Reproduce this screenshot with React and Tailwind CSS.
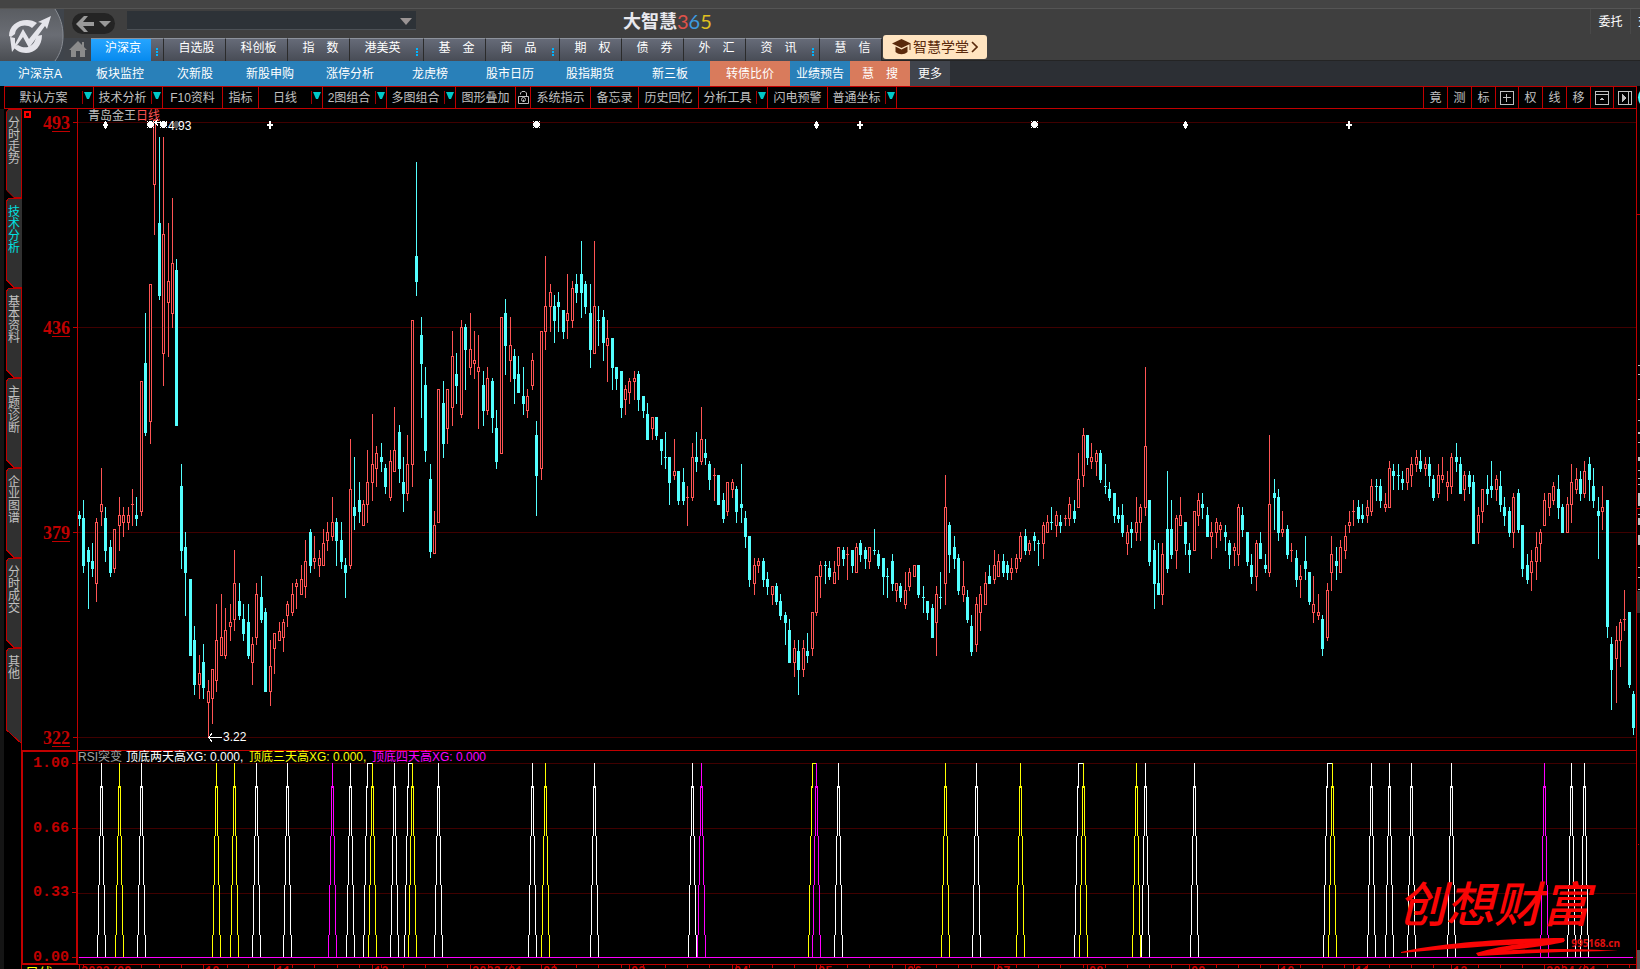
import React from "react";

const tabs = [
  { label: "沪深京", w: "w-[73px]", dots: true, active: true },
  { label: "自选股", w: "w-[62px]" },
  { label: "科创板", w: "w-[62px]" },
  { label: "指　数", w: "w-[62px]" },
  { label: "港美英", w: "w-[74px]", dots: true },
  { label: "基　金", w: "w-[62px]" },
  { label: "商　品", w: "w-[74px]", dots: true },
  { label: "期　权", w: "w-[62px]" },
  { label: "债　券", w: "w-[62px]" },
  { label: "外　汇", w: "w-[62px]" },
  { label: "资　讯", w: "w-[74px]", dots: true },
  { label: "慧　信", w: "w-[62px]" },
];

const BLUE = "bg-[#2980b9]";
const ORANGE = "bg-[#d97b5c]";
const links = [
  ["沪深京A", "w-20", BLUE],
  ["板块监控", "w-20", BLUE],
  ["次新股", "w-[70px]", BLUE],
  ["新股申购", "w-20", BLUE],
  ["涨停分析", "w-20", BLUE],
  ["龙虎榜", "w-20", BLUE],
  ["股市日历", "w-20", BLUE],
  ["股指期货", "w-20", BLUE],
  ["新三板", "w-20", BLUE],
  ["转债比价", "w-20", ORANGE],
  ["业绩预告", "w-[60px]", BLUE],
  ["慧　搜", "w-[60px]", ORANGE],
  ["更多", "w-10", "bg-[#40444c]"],
];

const tools = [
  ["默认方案", "w-[89px]", true],
  ["技术分析", "w-[69px]", true],
  ["F10资料", "w-[60px]"],
  ["指标", "w-[36px]"],
  ["日线", "w-[64px]", true],
  ["2图组合", "w-[64px]", true],
  ["多图组合", "w-[69px]", true],
  ["图形叠加", "w-[60px]"],
  ["lock", "w-[15px]"],
  ["系统指示", "w-[60px]"],
  ["备忘录", "w-[48px]"],
  ["历史回忆", "w-[60px]"],
  ["分析工具", "w-[69px]", true],
  ["闪电预警", "w-[60px]"],
  ["普通坐标", "w-[69px]", true],
];

const rightTools = [
  ["竟", "w-6"],
  ["测", "w-6"],
  ["标", "w-6"],
  ["grid", "w-[23px]"],
  ["权", "w-6"],
  ["线", "w-6"],
  ["移", "w-6"],
  ["up", "w-[23px]"],
  ["side", "w-[23px]"],
];

const sideTabs = ["分时走势", "技术分析", "基本资料", "主题诊断", "企业图谱", "分时成交", "其他"];

// Each group: origin of the block, then "colour x high top bottom low" in thirds of a pixel.
const groups = [
  [0, 430, `c 238 243 255 267 288;c 250 210 264 408 428;c 265 351 360 396 537;c 277 339 393 417 441;r 289 264 276 462 516;r 304 114 222 246 288;c 316 231 264 363 396;c 331 330 351 429 441;r 343 297 297 417 429;r 358 201 255 288 363;r 370 231 255 279 321;r 385 231 255 279 300;r 397 177 222 225 288;c 409 201 255 267 288;r 424 -147 -147 246 258;c 436 -351 -201 9 18;r 451 -438 -438 -24 42;r 463 -930 -930 -735 -585;c 478 -879 -621 -402 -390;r 490 -879 -588 -228 -132;r 505 -621 -447 -381 -219;r 517 -696 -501 -348 -306;c 529 -513 -480 -12 -12;c 544 102 168 363 417;c 556 306 351 429 558;c 571 447 447 678 678;c 583 588 630 765 795;r 598 675 729 765 807;c 610 642 696 774 807;r 625 750 783 819 921;r 637 717 717 807 882;r 649 522 630 753 786;r 664 492 621 678 678;r 676 534 600 678 687;r 691 522 576 591 633;r 703 360 459 570 603;c 718 459 513 558 570;c 730 522 567 612 633;c 745 522 576 678 687;r 757 621 642 699 765;r 769 459 492 624 645;c 784 438 501 570 579;c 796 534 546 786 786;r 811 630 708 786 828;r 823 609 609 657 732;r 838 576 603 633 633;r 850 567 576 624 666;r 862 513 522 558 591;r 877 459 492 549 558;r 889 447 459 471 537;r 904 405 447 495 495;r 916 330 393 471 504;c 931 297 306 408 429;r 943 318 384 396 417;r 958 360 384 408 441;r 970 297 339 408 408;r 982 276 306 333 363;r 997 201 276 321 333;c 1009 264 276 333 408;c 1024 276 330 396 417;c 1036 384 405 429 504;r 1051 27 177 408 417;c 1063 81 231 258 300;c 1078 156 210 246 279;r 1090 210 222 288 288;r 1102 60 156 225 279;r 1117 -48 102 159 213;r 1129 48 69 117 171;c 1144 39 81 96 126;c 1156 102 114 171 192;r 1171 60 93 204 213;r 1183 -69 60 126 126;c 1198 -15 6 117 159;c 1210 81 156 192 246;r 1222 15 102 192 213;r 1237 -330 -330 105 171;c 1249 -804 -522 -444 -402`],
  [400, 140, `c 64 531 585 672 834;c 76 681 735 933 966;c 91 972 1017 1236 1254;r 103 1113 1155 1242 1242;r 115 747 747 1149 1149;c 130 723 789 912 954;r 142 747 747 867 912;r 157 573 648 804 858;c 169 639 702 738 792;r 184 540 561 825 834;c 196 552 561 630 750;r 211 519 627 684 705;r 223 573 660 672 717;r 235 585 681 696 867;c 250 693 735 813 858;r 262 681 714 813 825;c 277 714 723 834 879;c 289 810 864 966 987;r 304 531 531 942 942;c 316 477 519 618 705;r 331 531 615 663 726;c 343 627 648 717 792;c 355 648 702 759 759;c 370 681 768 792 825;r 382 747 768 813 834;r 397 639 660 738 750;c 409 843 885 1008 1128;r 424 573 573 987 1020;r 436 348 498 576 630;r 451 432 456 501 576;c 463 465 498 543 609;c 475 456 486 501 576;c 490 510 510 576 597;r 502 402 519 543 597;r 517 423 444 543 564;c 529 402 432 459 489;c 544 303 402 459 534;c 556 423 432 501 522;c 571 432 519 630 684;r 583 303 498 642 642;c 595 498 540 543 618;c 610 510 531 609 663;r 622 540 594 618 726;c 637 594 594 684 750;c 649 681 681 717 750;c 664 693 693 804 834;r 676 735 747 780 825;r 688 714 723 759 792;r 703 693 714 726 780;c 715 693 702 780 813;c 730 768 768 813 834;c 742 789 822 900 900;r 757 831 831 867 900;c 769 831 831 888 900;c 784 897 897 933 975;c 796 876 951 954 987;c 808 951 951 1029 1095;r 823 897 993 1008 1020;c 835 993 993 1083 1095;c 850 984 1026 1083 1095;r 862 1038 1071 1074 1158;r 877 909 951 1074 1083;c 889 876 951 966 996;r 904 801 897 966 975;c 916 897 939 954 975;c 928 963 972 1020 1050;r 943 984 1005 1008 1083;c 955 1005 1005 1095 1095;c 970 1059 1080 1137 1149;r 982 1026 1026 1116 1128;r 997 1017 1026 1050 1074;c 1009 1038 1047 1116 1149;c 1024 972 1092 1104 1149;c 1036 1113 1134 1191 1224`],
  [700, 500, `c 148 108 108 240 261;r 163 174 195 252 285;r 175 174 183 198 219;c 190 174 183 240 261;c 202 216 237 261 285;r 217 258 258 285 315;c 229 249 258 306 315;c 241 282 303 348 360;c 256 336 345 369 435;c 268 357 390 489 489;r 283 420 444 489 531;c 295 420 453 510 585;r 310 420 444 510 531`],
  [800, 360, `c 22 819 873 888 909;r 37 756 756 867 888;r 49 648 648 759 768;r 61 603 615 651 714;c 76 603 615 618 672;c 88 603 624 651 660;r 103 603 636 672 672;r 115 561 561 618 660;c 130 561 570 597 618;r 142 561 582 585 660;c 157 570 570 618 639;r 169 549 561 639 639;c 181 540 549 585 606;c 196 561 570 597 627;r 208 561 561 606 627;c 223 507 570 573 585;c 235 570 582 618 627;c 250 594 594 651 705;c 262 624 648 651 714;c 277 582 603 672 693;r 289 669 669 693 726;c 301 669 678 714 726;r 316 636 690 735 747;r 328 624 636 681 693;r 343 615 615 651 651;c 355 615 615 705 714;c 370 678 711 714 759;c 382 723 723 759 780;c 397 732 744 834 834;r 409 678 702 789 888;c 421 636 711 714 747;r 436 345 441 672 735;c 448 486 495 585 639;c 463 528 561 597 627;c 475 582 594 693 705;r 490 603 678 705 726;c 502 690 711 780 789;c 514 765 798 876 888;r 529 711 732 855 876;r 541 678 702 759 813;r 556 636 669 735 735;c 568 615 648 672 672;r 583 570 615 660 672;r 595 582 603 651 651;c 610 582 603 639 651;c 622 603 615 639 660;r 634 594 624 639 660;r 649 582 594 627 639;r 661 516 528 597 606;c 676 507 528 573 585;r 688 540 549 573 585;c 703 516 528 543 573;c 715 540 549 552 618;r 730 486 495 552 597;r 742 465 486 519 519;c 754 441 486 489 510;r 769 453 465 498 531;c 781 465 486 498 519;r 796 465 474 477 498;r 808 411 432 477 498;c 823 420 453 477 489;r 835 279 357 444 444;r 850 204 225 348 381;c 862 225 225 294 315;r 874 249 291 306 327;r 889 270 279 306 348;c 901 270 279 360 369;c 916 312 378 381 402;c 928 366 387 414 423;c 943 399 399 468 489;c 955 441 465 477 489;c 967 432 465 519 531;r 982 495 516 552 585;c 994 486 507 519 564;r 1009 411 486 519 543;r 1021 432 441 489 543;r 1036 21 258 444 468;c 1048 420 420 606 618;c 1063 540 570 672 747;c 1075 549 669 705 705;r 1087 549 582 705 735;c 1102 333 507 627 639;c 1114 420 507 585 597;r 1129 465 474 573 627;r 1141 411 465 498 498;c 1156 486 486 552 585;c 1168 549 570 585 639;r 1183 453 453 573 573;r 1195 399 420 468 498;c 1207 399 432 444 477;c 1222 441 465 531 531;r 1234 486 516 531 597;r 1249 474 486 519 564;r 1261 486 495 510 543`],
  [1220, 360, `c 16 495 516 531 573;c 28 540 549 585 627;r 43 549 561 573 618;r 55 432 441 585 618;c 67 441 465 510 531;c 82 516 516 606 618;c 94 582 615 651 672;r 109 540 549 651 693;c 121 516 549 597 597;c 136 582 615 627 639;r 148 225 432 639 651;c 163 357 399 414 510;c 175 387 411 519 543;r 187 453 507 519 531;c 202 495 507 585 597;r 214 549 570 573 606;c 229 570 594 660 681;r 241 615 648 660 714;c 256 528 603 627 660;c 268 636 636 726 735;r 280 648 732 759 789;r 295 702 756 768 780;c 307 765 777 867 888;r 322 669 690 834 843;r 334 528 582 639 693;c 349 561 603 618 660;r 361 540 561 639 639;r 376 495 528 573 597;r 388 453 486 498 519;r 400 420 453 456 498;c 415 420 441 477 489;c 427 432 465 477 489;r 442 420 441 468 489;r 454 357 378 456 468;c 469 357 378 381 423;c 481 357 378 423 444;r 496 399 432 444 456;r 508 303 324 444 444;c 520 312 333 348 390;c 535 312 345 348 390;c 547 333 357 369 390;r 562 324 324 369 390;r 574 291 312 348 381;r 589 270 291 315 336;c 601 270 303 327 336;r 616 291 312 327 348;c 628 291 312 348 381;c 640 345 357 414 423;r 655 312 345 402 414;r 667 291 345 360 369;r 682 333 366 381 423;r 694 279 291 381 402;c 709 249 291 306 336;c 721 291 312 402 402;r 733 333 345 390 423;c 748 333 345 381 402;c 760 345 366 552 552;r 775 441 465 519 552;r 787 387 387 456 489;c 802 345 387 402 435;c 814 303 378 390 414;r 829 345 357 390 423;c 841 333 378 435 456;c 853 411 441 468 498;c 868 441 453 519 531;r 880 399 411 519 564;c 895 387 399 510 519;c 907 495 495 627 651;c 922 582 615 660 672;r 934 570 603 639 693;r 949 516 561 606 660;r 961 507 516 552 606;r 973 399 420 498 498;r 988 399 399 444 468;r 1000 366 378 423 435;c 1015 345 387 444 477;c 1027 432 441 519 519;r 1042 411 432 519 519;r 1054 312 366 435 489;r 1069 324 357 390 402;c 1081 333 357 402 423;r 1093 303 333 402 414;c 1108 291 312 360 423;c 1120 324 378 423 444;c 1135 411 453 468 597;r 1147 378 441 456 510;c 1162 420 420 801 834;c 1174 831 852 930 1050;r 1189 798 840 897 1029;r 1201 777 786 843 921;r 1213 690 777 780 813;c 1228 756 756 975 984;c 1240 993 1002 1104 1125`],
];

const candles = groups.flatMap(([ox, oy, rows]) =>
  rows.split(";").map((row) => {
    const [kind, ...n] = row.split(" ");
    const [x, h, t, b, l] = n.map(Number);
    const y = (v) => oy + Math.round(v / 3);
    return { up: kind === "r", x: ox + Math.floor(x / 3), h: y(h), t: y(t), b: y(b), l: y(l) };
  })
);

const markers = [
  ["dot", 105], ["star", 150], ["star", 163], ["dim", 176], ["plus", 269], ["star", 536],
  ["dot", 816], ["plus", 859], ["star", 1034], ["dot", 1185], ["plus", 1348],
];

// colour, first peak, and (for flat tops) colour and place of the second peak
const spikes = [
  ["w", 101], ["y", 119], ["w", 141], ["y", 216], ["y", 234], ["w", 256], ["w", 287], ["m", 332],
  ["w", 350], ["w", 367, "y", 372], ["w", 394], ["w", 408, "y", 412], ["w", 438], ["w", 532],
  ["y", 545], ["w", 594], ["w", 692], ["m", 701], ["y", 812, "m", 816], ["w", 838], ["y", 945],
  ["w", 976], ["y", 1020], ["w", 1078, "y", 1083], ["y", 1136], ["w", 1145], ["w", 1194],
  ["w", 1327, "y", 1332], ["w", 1371], ["w", 1389], ["w", 1411], ["w", 1451], ["m", 1544],
  ["w", 1571], ["w", 1584],
];
const ink = { w: "#ffffff", y: "#ffff00", m: "#ff00ff" };

const ticks = [83, 141, 159, 181, 227, 248, 292, 314, 337, 359, 381, 403, 425, 447, 488, 511, 554, 576, 598, 621, 643, 665, 687, 709, 736, 749, 772, 794, 820, 847, 869, 892, 914, 936, 958, 971, 998, 1016, 1038, 1060, 1083, 1105, 1127, 1149, 1171, 1216, 1238, 1260, 1300, 1322, 1344, 1367, 1389, 1411, 1433, 1478, 1500, 1522, 1562, 1584, 1607, 1629];
const months = [
  [79, "2022/09"], [203, "10"], [274, "11"], [372, "12"], [470, "2023/01"], [541, "02"],
  [629, "03"], [732, "04"], [816, "05"], [905, "06"], [994, "07"], [1087, "08"], [1189, "09"],
  [1278, "10"], [1353, "11"], [1451, "12"], [1544, "2024/01"],
];

function Logo() {
  return (
    <svg viewBox="0 0 64 52" className="h-[52px] w-16 shrink-0" role="img" aria-label="大智慧">
      <defs>
        <linearGradient id="lg" x1="0" y1="0" x2="0" y2="1">
          <stop offset="0" stopColor="#5a5d62" />
          <stop offset="0.5" stopColor="#6a6d74" />
          <stop offset="1" stopColor="#4a4d52" />
        </linearGradient>
      </defs>
      <rect width="64" height="52" fill="#3f444b" />
      <path d="M0 0H55C60 8 63 16 63 27C63 37 60 45 55 52H0Z" fill="url(#lg)" />
      <path d="M55 0C60 8 63 16 63 27C63 37 60 45 55 52" fill="none" stroke="#888c93" />
      <g fill="#e4e4ea">
        <path d="M9 27C9 17 17 11 27 11C31 11 34 12 37 14L32 19C25 14 16 17 15 25L11 28Z" />
        <path d="M42 26C42 37 35 44 26 44C20 44 16 41 13 38L18 36C25 41 35 38 36 27Z" />
        <path d="M10 28L15 29L15 35L23 20L29 30L42 14L38 13L51 7L47 20L45 17L29 39L23 28L12 43Z" />
      </g>
    </svg>
  );
}

function Home() {
  return (
    <svg viewBox="0 0 18 17" className="h-[17px] w-[18px]">
      <path d="M9 0L13 4V1H15V6L18 9H16V16H11V10H7V16H2V9H0Z" fill="#8b8b8b" />
    </svg>
  );
}

function ToolIcon({ name }) {
  if (name === "lock")
    return (
      <svg viewBox="0 0 13 15" className="h-[15px] w-[13px] shrink-0" fill="none" stroke="#c0c0c0">
        <path d="M3.500 4.500V3L5 1.500H8L9.500 3V6M1.500 6.500H11.500V13.500H1.500Z" />
        <circle cx="6.500" cy="9.500" r="2" />
        <path d="M6.500 9.500V12" />
      </svg>
    );
  return (
    <svg viewBox="0 0 14 14" className="h-[14px] w-[14px]" fill="none" stroke="#c0c0c0" shapeRendering="crispEdges">
      <path d="M0.500 0.500H13.500V13.500H0.500Z" />
      {name === "grid" && <path d="M6.500 3V11M3 6.500H11" />}
      {name === "up" && <path d="M0.500 3.500H13.500M6 7.500H8M5 8.500H9" />}
      {name === "side" && (
        <>
          <path d="M10.500 0.500V13.500" />
          <path d="M4 3L8 7L4 11Z" fill="#c0c0c0" stroke="none" />
        </>
      )}
    </svg>
  );
}

function Triangle() {
  return (
    <svg viewBox="0 0 8 8" className="h-2 w-2 shrink-0">
      <path d="M0 0H8L5 7H3Z" fill="#00c8c8" />
    </svg>
  );
}

function Header() {
  return (
    <header className="shrink-0 bg-[#3f3f3f] text-xs text-white">
      <div className="h-[9px] border-b border-[#555] bg-[#444]" />
      <div className="flex h-[52px] border-b border-[#242424]">
        <Logo />
        <div className="flex min-w-0 flex-1 flex-col">
          <div className="flex h-[29px] shrink-0 pl-2">
            <button aria-label="后退" className="mt-1 flex h-[21px] w-[43px] shrink-0 items-center justify-center gap-[5px] rounded-full bg-[#242424]">
              <svg viewBox="0 0 18 16" className="h-4 w-[18px]">
                <path d="M0 8L8 0H12L7 6H18V10H7L12 16H8Z" fill="#999" />
              </svg>
              <svg viewBox="0 0 12 6" className="h-[6px] w-3">
                <path d="M0 0H12L6 6Z" fill="#999" />
              </svg>
            </button>
            <div className="relative ml-3 mt-[2px] h-5 w-[289px] shrink-0">
              <select aria-label="搜索" className="h-[19px] w-full appearance-none border-b border-[#4c5156] bg-[#2d3237]">
                <option></option>
              </select>
              <svg viewBox="0 0 12 7" className="pointer-events-none absolute right-1 top-[7px] h-[7px] w-3">
                <path d="M0 0H12L6 7Z" fill="#9a9494" />
              </svg>
            </div>
            <div className="ml-[207px] flex h-6 shrink-0 items-center font-['Lato','Noto_Sans_CJK_SC',sans-serif] text-xl leading-6">
              <span className="text-lg font-bold leading-6 text-[#e8e8ee]">大智慧</span>
              <span className="text-[#e0524a]">3</span>
              <span className="text-[#3d9be0]">6</span>
              <span className="text-[#e0c020]">5</span>
            </div>
            <div className="ml-auto flex h-[25px] w-[50px] shrink-0 overflow-hidden border-l border-[#494949]">
              <button className="w-10 shrink-0 border-r border-[#494949]">委托</button>
              <button className="shrink-0 pl-[7px]">交易</button>
            </div>
          </div>
          <nav className="flex h-[23px] shrink-0">
            <button aria-label="首页" className="flex w-[27px] shrink-0 items-center justify-center bg-[#40444a]">
              <Home />
            </button>
            {tabs.map((t) => (
              <button
                key={t.label}
                className={
                  "flex shrink-0 border-r border-t border-r-[#2b2b2b] border-t-[#8d929c] bg-linear-to-b from-[#666b78] to-[#484c56] leading-4 " + t.w
                }
              >
                <span className={"h-full flex-1 whitespace-pre pl-1 pt-px text-center " + (t.active ? "bg-linear-to-b from-[#25a5ff] to-[#058aee]" : "")}>
                  {t.label}
                </span>
                {t.dots && (
                  <span className="flex h-full w-3 flex-col items-center justify-center gap-px pt-1">
                    <i className="size-[2px] bg-[#00b4ff]" />
                    <i className="size-[2px] bg-[#00b4ff]" />
                    <i className="size-[2px] bg-[#00b4ff]" />
                  </span>
                )}
              </button>
            ))}
            <button className="-mt-[3px] ml-px flex h-6 w-[104px] shrink-0 items-center rounded-[3px] bg-[#ffe4c0] pl-[9px] text-sm text-[#5a2a0c]">
              <svg viewBox="0 0 20 16" className="mr-px h-4 w-5 shrink-0" fill="#5a2a0c">
                <path d="M9.500 0L19 4.500L9.500 9L0 4.500Z" />
                <path d="M3.500 7.500L9.500 10.500L15.500 7.500V13C12 16 7 16 3.500 13Z" />
                <path d="M17.500 5H18.500V11H17.500Z" />
              </svg>
              智慧学堂
              <svg viewBox="0 0 7 12" className="ml-[2px] h-3 w-[7px]" fill="none" stroke="#5a2a0c" strokeWidth="1.600">
                <path d="M1 1L6 6L1 11" />
              </svg>
            </button>
          </nav>
        </div>
      </div>
    </header>
  );
}

function LinkBar() {
  return (
    <nav className="flex h-[25px] shrink-0 bg-[#2c2f34] text-xs leading-[26px] text-white">
      {links.map(([label, w, bg]) => (
        <a key={label} href="#" className={`h-full shrink-0 whitespace-pre text-center ${w} ${bg}`}>
          {label}
        </a>
      ))}
    </nav>
  );
}

function ToolBar() {
  return (
    <div className="flex h-[23px] shrink-0 bg-black pl-1 text-xs text-[#c0c0c0]">
      <div className="flex min-w-0 flex-1 border border-[#c00000]">
        {tools.map(([label, w, drop]) => (
          <button key={label} aria-label={label} className={`flex shrink-0 items-center border-r border-[#c00000] ${w}`}>
            <span className="flex flex-1 justify-center whitespace-nowrap">
              {label === "lock" ? <ToolIcon name="lock" /> : label}
            </span>
            {drop && (
              <span className="flex h-[13px] w-[11px] shrink-0 items-start border-l border-[#a00000] pl-px pt-px">
                <Triangle />
              </span>
            )}
          </button>
        ))}
        <div className="ml-auto flex">
          {rightTools.map(([t, w]) => (
            <button key={t} aria-label={t} className={`flex shrink-0 items-center justify-center border-l border-[#c00000] ${w}`}>
              {t.length > 1 ? <ToolIcon name={t} /> : t}
            </button>
          ))}
        </div>
      </div>
      <svg viewBox="0 0 3 23" className="h-[23px] w-[3px] shrink-0">
        <path d="M3 5Q-1 11 3 18Z" fill="#4ff" />
      </svg>
    </div>
  );
}

function SideTabs() {
  return (
    <nav className="flex w-[21px] shrink-0 flex-col border-l-4 border-[#151515] bg-black">
      {sideTabs.map((label, i) => {
        const active = i === 1;
        const last = i === sideTabs.length - 1;
        const h = last ? 97 : 90;
        return (
          <button
            key={label}
            className={
              "relative ml-[2px] flex w-4 shrink-0 justify-center text-xs leading-3 " +
              (last ? "h-[97px] pt-2 " : i === 0 ? "h-[89px] pt-2 " : "h-[90px] pt-2 ") +
              (active ? "text-[#00e0e0]" : "text-[#c0c0c0]")
            }
          >
            <svg viewBox={`0 0 16 ${h}`} preserveAspectRatio="none" className="absolute inset-0 h-full w-full" shapeRendering="crispEdges">
              {i > 1 && <path d="M0 0H16V8L8 0Z" fill="#303030" />}
              <path
                d={last ? "M16 0.500H2.500L0.500 3V82L16 96" : "M16 0.500H2.500L0.500 3V82L8 89.500H16"}
                fill="#303030"
                stroke="#c00000"
              />
              {!active && <path d={`M15.500 0V${h}`} stroke="#c00000" />}
            </svg>
            <span className="relative w-3 break-all">{label}</span>
          </button>
        );
      })}
    </nav>
  );
}

function AxisLabel({ children, row }) {
  return (
    <div className={"flex items-center justify-end gap-[3px] font-bold text-[#c00000] " + row}>
      <span>{children}</span>
      <i className="h-px w-1 bg-[#c00000]" />
    </div>
  );
}

function Marker({ kind, x }) {
  if (kind === "plus") return <path d={`M${x} 121h2v3h2v2h-2v3h-2v-3h-2v-2h2z`} fill="#fff" />;
  if (kind === "dot") return <path d={`M${x} 121h1v1h1v2h1v2h-1v2h-1v1h-1v-1h-1v-2h-1v-2h1v-2h1z`} fill="#fff" />;
  return (
    <path
      d={`M${x - 3} 121h1v1h1v-1h3v1h1v-1h1v1h-1v1h1v3h-1v1h1v1h-1v-1h-1v1h-3v-1h-1v1h-1v-1h1v-1h-1v-3h1v-1h-1z`}
      fill={kind === "dim" ? "#555" : "#fff"}
    />
  );
}

function PriceChart() {
  return (
    <section className="flex h-[641px] shrink-0">
      <div className="relative flex w-[55px] shrink-0 flex-col justify-between pb-[2px] pt-[3px]">
        <svg viewBox="0 0 8 8" className="absolute left-[2px] top-[2px] h-2 w-2">
          <path d="M1 1H6V6H1Z" fill="#200" stroke="#f00" strokeWidth="2" />
        </svg>
        {["493", "436", "379", "322"].map((v) => (
          <AxisLabel key={v} row="h-[21px] font-['Liberation_Serif',serif] text-lg leading-none">
            {v[0]}
            <span className="underline decoration-1 underline-offset-2">{v.slice(1)}</span>
          </AxisLabel>
        ))}
      </div>
      <div className="relative min-w-0 flex-1">
        <svg viewBox="77 109 1559 641" preserveAspectRatio="none" className="block h-full w-full" shapeRendering="crispEdges">
          {[122, 327, 532, 737].map((y) => (
            <rect key={y} x="77" y={y} width="1559" height="1" fill="#400000" />
          ))}
          <rect x="77" y="109" width="1" height="641" fill="#c00000" />
          {candles.map((c) => {
            const color = c.up ? "#ff5454" : "#54ffff";
            const bh = Math.max(1, c.b - c.t);
            return (
              <g key={c.x} fill={color}>
                <rect x={c.x} y={c.h} width="1" height={c.l - c.h} />
                <rect x={c.x - 1} y={c.t} width="3" height={bh} />
                {c.up && bh > 2 && <rect x={c.x} y={c.t + 1} width="1" height={bh - 2} fill="#000" />}
              </g>
            );
          })}
          {markers.map(([kind, x]) => (
            <Marker key={x} kind={kind} x={x} />
          ))}
          <path d="M155 122.500H167M158 119.500L155 122.500L158 125.500M209 737.500H222M212 733.500L208.500 737.500L212 741.500" stroke="#fff" fill="none" />
        </svg>
        <h1 className="absolute left-[11px] top-0 text-xs leading-[14px] text-[#c0c0c0]">
          青岛金王<span className="text-[#ff5454]">日线</span>
        </h1>
        <span className="absolute left-[91px] top-[11px] font-['Liberation_Sans',sans-serif] text-xs leading-3 text-white">4.93</span>
        <span className="absolute left-[146px] top-[622px] font-['Liberation_Sans',sans-serif] text-xs leading-3 text-white">3.22</span>
      </div>
    </section>
  );
}

function Watermark() {
  return (
    <div className="absolute bottom-[5px] right-[12px] w-[226px] text-[#fa0505]">
      <p className="whitespace-nowrap font-['Noto_Sans_CJK_SC',sans-serif] text-5xl font-medium italic leading-[64px]">创想财富</p>
      <svg viewBox="0 0 226 22" className="mt-1 block h-[22px] w-full" fill="#fa0505">
        <path d="M3 15C40 6 110 1 166 1L167 4C130 7 70 10 3 16Z" />
        <path d="M78 16C100 9 130 5 166 2L166 5C150 9 120 12 104 14C140 11 190 12 220 14C180 14 130 16 80 19Z" />
      </svg>
      <span className="absolute bottom-[10px] right-1 font-['Noto_Sans',sans-serif] text-[10px] font-bold leading-3 text-[#e01010]">995168.cn</span>
    </div>
  );
}

// One flank of a spike: a staircase of four columns going down from the peak.
function flank(x, dir) {
  return [786, 836, 885, 935]
    .map((y, i) => {
      const end = [836, 885, 935, 957][i];
      return `M${x + dir * (i + 1)} ${y}h1V${end}h-1z`;
    })
    .join("");
}

function Spike({ spike }) {
  const [a, x, b, x2] = spike;
  const stem = (at) => `M${at} 763h1V788h-1z`;
  if (!b) return <path d={stem(x) + flank(x, -1) + flank(x, 1)} fill={ink[a]} />;
  return (
    <>
      <path d={stem(x) + flank(x, -1) + `M${x} 763H${x2}v1H${x}z`} fill={ink[a]} />
      <path d={stem(x2) + flank(x2, -1) + flank(x2, 1)} fill={ink[b]} />
    </>
  );
}

function Indicator() {
  return (
    <section className="flex h-[215px] shrink-0">
      <div className="flex w-[57px] shrink-0 flex-col justify-between border-2 border-[#c00000] pt-[6px]">
        {["1.00", "0.66", "0.33", "0.00"].map((v) => (
          <AxisLabel key={v} row="h-[11px] font-['Liberation_Mono',monospace] text-[15px] leading-none">{v}</AxisLabel>
        ))}
      </div>
      <div className="relative min-w-0 flex-1 border-y border-[#c00000]">
        <svg viewBox="78 751 1558 213" preserveAspectRatio="none" className="block h-full w-full" shapeRendering="crispEdges">
          {[763, 828, 893, 957].map((y) => (
            <rect key={y} x="78" y={y} width="1558" height="1" fill="#400000" />
          ))}
          <rect x="79" y="957" width="1554" height="1" fill="#ff00ff" />
          {spikes.map((s) => (
            <Spike key={s[1]} spike={s} />
          ))}
        </svg>
        <p className="absolute left-0 top-0 flex whitespace-nowrap font-['Liberation_Sans','Noto_Sans_CJK_SC',sans-serif] text-xs leading-3">
          <span className="w-12 text-[#a0a0a0]">RSI突变</span>
          <span className="w-[123px] text-white">顶底两天高XG: 0.000,</span>
          <span className="w-[123px] text-[#ffff00]">顶底三天高XG: 0.000,</span>
          <span className="text-[#ff00ff]">顶底四天高XG: 0.000</span>
        </p>
        <Watermark />
      </div>
    </section>
  );
}

function TimeAxis() {
  return (
    <footer className="flex h-5 shrink-0">
      <span className="w-[57px] shrink-0 border-l border-[#c00000] pl-[3px] text-sm leading-4 text-[#ffff00]">日线</span>
      <svg viewBox="78 965 1558 20" preserveAspectRatio="none" className="block h-5 min-w-0 flex-1" fill="#c00000">
        {ticks.map((x) => (
          <rect key={x} x={x} y="965" width="1" height="3" />
        ))}
        {months.map(([x, label]) => (
          <g key={x}>
            <rect x={x} y="965" width="1" height="12" />
            <text x={x + 2} y="975" fontSize="12" fontWeight="bold" fontFamily="Liberation Mono, monospace">{label}</text>
          </g>
        ))}
      </svg>
    </footer>
  );
}

function RightEdge() {
  const marks = [[365, 1], [374, 1], [399, 1], [420, 1], [432, 2], [442, 1], [457, 4], [470, 1], [478, 1], [484, 1], [493, 13], [514, 1], [518, 7], [535, 10], [567, 1], [577, 1], [589, 1]];
  return (
    <svg viewBox="0 109 4 876" className="h-[876px] w-1 shrink-0" shapeRendering="crispEdges">
      <rect y="109" width="1" height="876" fill="#c00000" />
      {marks.map(([y, h]) => (
        <rect key={y} x="2" y={y} width="2" height={h} fill="#c0c0c0" />
      ))}
      <rect x="1" y="508" width="3" height="1" fill="#c00000" />
      <rect x="1" y="591" width="3" height="22" fill="#303030" />
      <rect x="1" y="214" width="3" height="1" fill="#c00000" />
      <rect x="2" y="844" width="1" height="1" fill="#c00000" />
      <rect x="1" y="950" width="3" height="35" fill="#555" />
    </svg>
  );
}

export default function App() {
  return (
    <div className="flex h-screen flex-col overflow-hidden bg-black font-['Liberation_Sans','Noto_Sans_CJK_SC',sans-serif]">
      <Header />
      <LinkBar />
      <ToolBar />
      <main className="flex min-h-0 flex-1 overflow-hidden">
        <SideTabs />
        <div className="flex min-w-0 flex-1 flex-col">
          <div className="flex flex-col border-l border-[#c00000]">
            <PriceChart />
          </div>
          <Indicator />
          <TimeAxis />
        </div>
        <RightEdge />
      </main>
    </div>
  );
}
